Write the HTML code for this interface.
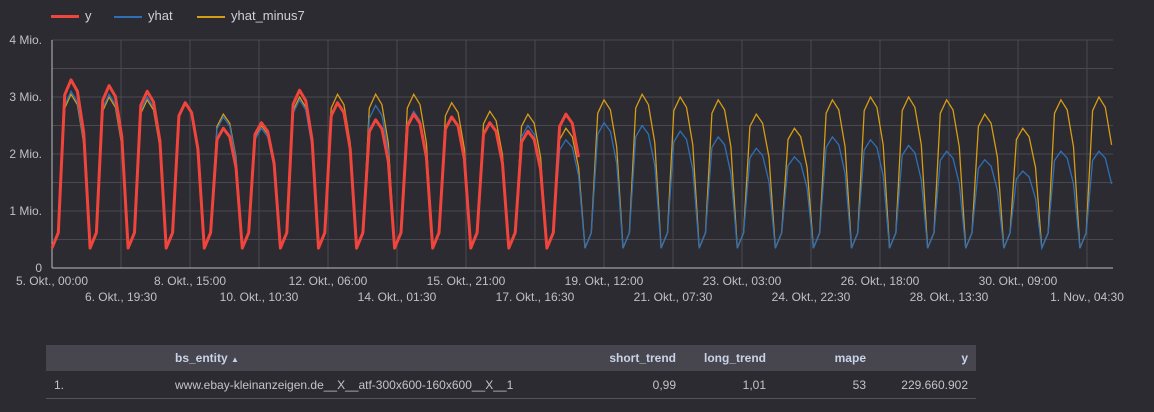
<!DOCTYPE html>
<html><head><meta charset="utf-8">
<style>
body{margin:0;width:1154px;height:412px;background:#2c2b31;font-family:"Liberation Sans",Roboto,sans-serif;overflow:hidden;position:relative;color:#c8c8cc}
.lg{position:absolute;top:9px;font-size:13px;color:#d0d0d4}
.ax{position:absolute;font-size:12px;color:#c0c0c4;white-space:nowrap}
table{position:absolute;left:46px;top:345px;width:930px;border-collapse:collapse;font-size:12px;table-layout:fixed}
th{background:#47464f;color:#c9d3e8;height:26px;font-weight:bold;text-align:right;padding:0 8px;white-space:nowrap}
td{height:27px;color:#c4c4c8;text-align:right;padding:0 8px;border-bottom:1px solid #55545b;white-space:nowrap;overflow:hidden}
</style></head><body>
<div class="lg" style="left:51px;top:8px"><span style="display:inline-block;width:28px;height:3px;background:#f0453c;vertical-align:middle;margin-right:6px"></span>y</div>
<div class="lg" style="left:114px;top:8px"><span style="display:inline-block;width:28px;height:2px;background:#2f6fb5;vertical-align:middle;margin-right:6px"></span>yhat</div>
<div class="lg" style="left:197px;top:8px"><span style="display:inline-block;width:28px;height:2px;background:#d59c16;vertical-align:middle;margin-right:6px"></span>yhat_minus7</div>
<svg id="c" width="1154" height="300" style="position:absolute;left:0;top:0"></svg>
<div class="ax" style="right:1112px;top:33px">4 Mio.</div>
<div class="ax" style="right:1112px;top:90px">3 Mio.</div>
<div class="ax" style="right:1112px;top:147px">2 Mio.</div>
<div class="ax" style="right:1112px;top:204px">1 Mio.</div>
<div class="ax" style="right:1112px;top:261px">0</div>
<div id="xl"></div>
<table>
<colgroup><col style="width:100px"><col style="width:428px"><col style="width:110px"><col style="width:90px"><col style="width:100px"><col style="width:102px"></colgroup>
<tr><th></th><th style="text-align:left;padding-left:29px">bs_entity <span style="font-size:8px">▲</span></th><th>short_trend</th><th>long_trend</th><th>mape</th><th>y</th></tr>
<tr><td style="text-align:left">1.</td><td style="text-align:left;padding-left:29px">www.ebay-kleinanzeigen.de__X__atf-300x600-160x600__X__1</td><td>0,99</td><td>1,01</td><td>53</td><td>229.660.902</td></tr>
</table>
<script>
var s='',X0=52,X1=1113,Y0=268,k=57,DX=6.345;
for(var i=0;i<=8;i++)s+='<line x1="'+X0+'" x2="'+X1+'" y1="'+(40+i*28.5)+'" y2="'+(40+i*28.5)+'" stroke="#4a4950"/>';
for(var x=X0+69;x<X1;x+=69)s+='<line x1="'+x+'" x2="'+x+'" y1="40" y2="268" stroke="#4a4950"/>';
s+='<line x1="'+X0+'" x2="'+X0+'" y1="40" y2="268" stroke="#bbb"/><line x1="'+X0+'" x2="'+X1+'" y1="268" y2="268" stroke="#bbb"/>';
var pm=[3.05,3.0,2.95,2.9,2.7,2.5,3.0,3.05,3.05,3.05,2.9,2.75,2.7,2.45,2.95,3.05,3.0,2.95,2.7,2.45,2.95,3.0,3.0,2.95,2.7,2.45,2.95,3.0,2.95];
var ph=[3.1,3.05,3.0,2.9,2.65,2.45,2.95,2.9,2.85,2.75,2.65,2.55,2.5,2.25,2.55,2.5,2.4,2.3,2.1,1.95,2.3,2.25,2.15,2.05,1.9,1.7,2.05,2.05,2.0];
var py=[3.3,3.2,3.1,2.9,2.45,2.55,3.12,2.9,2.6,2.7,2.65,2.55,2.4,2.7];
var sh=[0.35,0.64,0.92,1,0.94,0.72];
function pts(P,n){var a=[];for(var j=0;j<n;j++){var d=Math.floor(j/6),m=j%6,p=P[d];var v=m==0?0.35:m==1?0.62:p*sh[m];var x=X0+j*DX;if(x>X1)break;a.push(x.toFixed(1)+','+(Y0-v*k).toFixed(1));}return a.join(' ');}
var N=Math.floor((X1-X0)/DX)+1;
s+='<polyline fill="none" stroke="#d59c16" stroke-width="1.3" points="'+pts(pm,N)+'"/>';
s+='<polyline fill="none" stroke="#2f6fb5" stroke-width="1.3" points="'+pts(ph,N)+'"/>';
s+='<polyline fill="none" stroke="#f0453c" stroke-width="3" stroke-linejoin="round" points="'+pts(py,84)+'"/>';
document.getElementById('c').innerHTML=s;
var t=['5. Okt., 00:00','6. Okt., 19:30','8. Okt., 15:00','10. Okt., 10:30','12. Okt., 06:00','14. Okt., 01:30','15. Okt., 21:00','17. Okt., 16:30','19. Okt., 12:00','21. Okt., 07:30','23. Okt., 03:00','24. Okt., 22:30','26. Okt., 18:00','28. Okt., 13:30','30. Okt., 09:00','1. Nov., 04:30'];
var h='';for(var i=0;i<t.length;i++){h+='<div class="ax" style="left:'+(X0+i*69-40)+'px;width:80px;text-align:center;top:'+(i%2?290:274)+'px">'+t[i]+'</div>';}
document.getElementById('xl').innerHTML=h;
</script>
</body></html>
